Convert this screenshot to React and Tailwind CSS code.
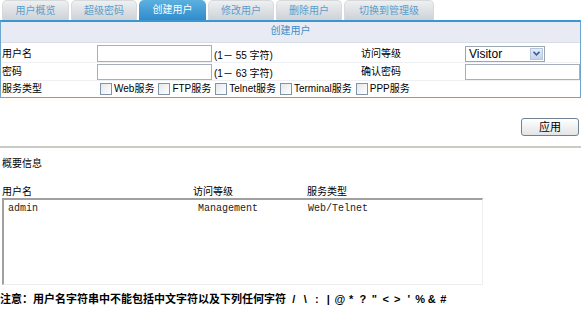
import React from "react";

const cn = '"Liberation Sans", "Noto Sans CJK SC", sans-serif';

function Tab({ label, active, w }) {
  return (
    <div
      className={
        "h-[20px] rounded-t-[5px] flex items-center justify-center text-[10px] " +
        (active
          ? "bg-gradient-to-b from-[#5cb0e0] to-[#2f8ccc] text-white"
          : "bg-gradient-to-b from-[#eef0f2] to-[#cdd2d6] text-[#5b9dcc] border border-b-0 border-[#d6dadd]")
      }
      style={{ width: w }}
    >
      {label}
    </div>
  );
}

function Check({ label }) {
  return (
    <div className="flex items-center gap-[2px] mr-[4px]">
      <div className="w-[12px] h-[12px] border border-[#8394a4] bg-gradient-to-br from-[#e4e8ec] to-white" />
      <span>{label}</span>
    </div>
  );
}

const specials = ["/", "\\", ":", "|", "@", "*", "?", "\"", "<", ">", "'", "%", "&", "#"];

export default function App() {
  return (
    <div className="w-[581px] h-[312px] bg-white text-black text-[10px] leading-none overflow-hidden" style={{ fontFamily: cn }}>
      <div className="flex gap-[2px] pl-[2px]">
        <Tab label="用户概览" w={67} />
        <Tab label="超级密码" w={66} />
        <Tab label="创建用户" w={67} active />
        <Tab label="修改用户" w={66} />
        <Tab label="删除用户" w={66} />
        <Tab label="切换到管理级" w={90} />
      </div>
      <div className="border-t-[2px] border-[#3a97d2] border-x border-b border-x-[#6ea5cf] border-b-[#6ea5cf] w-[581px]">
        <div className="h-[20px] bg-[#e8ebf3] flex items-center justify-center text-[#3a8fcb] pb-[2px]">创建用户</div>
        <div className="flex items-center h-[20px] border-t border-[#d7dde6]">
          <div className="w-[96px] pl-[1px] mt-[2px]">用户名</div>
          <div className="w-[115px] h-[17px] mt-[2px] border border-[#a6b0bb] bg-white" />
          <div className="w-[149px] pl-[2px] mt-[6px]">(1－ 55 字符)</div>
          <div className="w-[104px] mt-[2px]">访问等级</div>
          <div className="w-[80px] h-[16px] mt-[2px] border border-[#9aa6b2] bg-white flex items-center justify-between pl-[3px] pr-[1px]">
            <span className="text-[12px]">Visitor</span>
            <div className="w-[13px] h-[12px] bg-gradient-to-b from-[#e4ecf7] to-[#c3d3ea] border border-[#b6c6dc] flex items-center justify-center">
              <svg width="7" height="5" viewBox="0 0 7 5"><path d="M0.5 0.8 L3.5 3.8 L6.5 0.8" fill="none" stroke="#3d5f97" strokeWidth="1.6" /></svg>
            </div>
          </div>
        </div>
        <div className="flex items-center h-[18px] border-t border-[#eef0f4]">
          <div className="w-[96px] pl-[1px]">密码</div>
          <div className="w-[115px] h-[16px] border border-[#a6b0bb] bg-white" />
          <div className="w-[149px] pl-[2px] mt-[5px]">(1－ 63 字符)</div>
          <div className="w-[104px]">确认密码</div>
          <div className="w-[115px] h-[16px] border border-[#a6b0bb] bg-white" />
        </div>
        <div className="flex items-center h-[17px] border-t border-[#eef0f4]">
          <div className="w-[99px] pl-[1px]">服务类型</div>
          <Check label="Web服务" />
          <Check label="FTP服务" />
          <Check label="Telnet服务" />
          <Check label="Terminal服务" />
          <Check label="PPP服务" />
        </div>
      </div>
      <div className="h-[4px] bg-[#fffdf6]" />
      <div className="flex justify-end pr-[2px] pt-[16px]">
        <button className="w-[58px] h-[18px] rounded-[3px] border border-[#6f8294] bg-gradient-to-b from-white to-[#e2e4e6] text-[11px]" style={{ fontFamily: cn }}>应用</button>
      </div>
      <div className="mt-[10px] h-[2px] bg-[#cbcbc6]" />
      <div className="pl-[2px] mt-[11px]">概要信息</div>
      <div className="flex mt-[18px] pl-[2px]">
        <div className="w-[191px]">用户名</div>
        <div className="w-[114px]">访问等级</div>
        <div>服务类型</div>
      </div>
      <div
        className="ml-[2px] mt-[1px] w-[481px] h-[87px] border-t-2 border-l-2 border-[#a0a0a0] border-r border-b border-r-[#eeeeee] border-b-[#eeeeee] flex pt-[4px] pl-[4px] text-[10px] text-[#222]"
        style={{ fontFamily: '"Liberation Mono", monospace' }}
      >
        <div className="w-[190px]">admin</div>
        <div className="w-[110px]">Management</div>
        <div>Web/Telnet</div>
      </div>
      <div className="mt-[9px] font-bold whitespace-nowrap text-[11px] flex items-center">
        <span>注意：用户名字符串中不能包括中文字符以及下列任何字符</span>
        <span className="inline-flex ml-[2px]">
          {specials.map((c, i) => (
            <span key={i} className="inline-block w-[11.5px] text-center">{c}</span>
          ))}
        </span>
      </div>
    </div>
  );
}
